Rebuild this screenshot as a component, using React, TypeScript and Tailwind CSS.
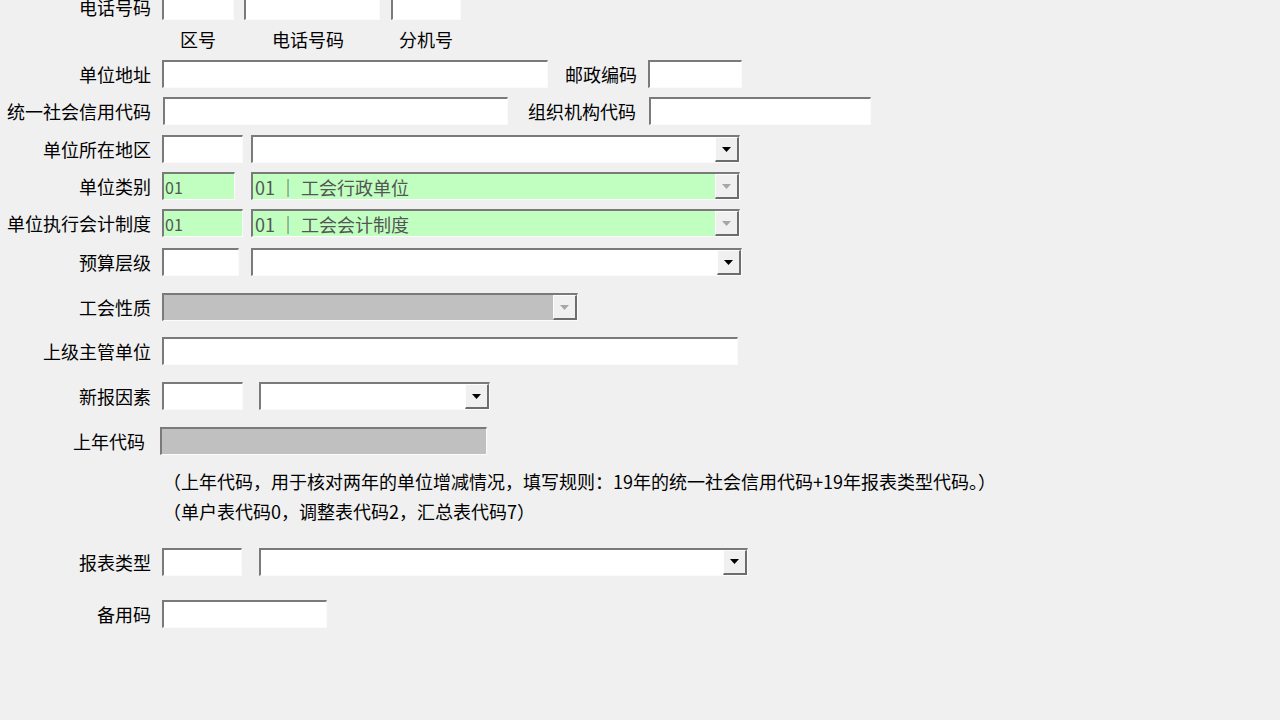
import React from "react";

// classic sunken field edge
const sunken =
  "border-t-2 border-l-2 border-b border-r border-t-[#7a7a7a] border-l-[#7a7a7a] border-b-[#fbfbfb] border-r-[#fbfbfb]";

function Field({ className, text }: { className: string; text?: string }) {
  return (
    <div className={`h-[28px] ${sunken} ${className} flex items-center pl-[1px] text-[#555] text-[16px] overflow-hidden whitespace-nowrap`}>
      {text}
    </div>
  );
}

function Arrow({ disabled }: { disabled?: boolean }) {
  return (
    <div className="w-[24px] h-full bg-[#f0f0f0] border-t border-l border-b-2 border-r-2 border-t-[#fdfdfd] border-l-[#fdfdfd] border-b-[#6d6d6d] border-r-[#6d6d6d] flex items-center justify-center">
      <svg width="9" height="5" viewBox="0 0 9 5">
        <path d="M0 0H9L4.5 5Z" fill={disabled ? "#a6a6a6" : "#000"} />
      </svg>
    </div>
  );
}

function Combo({ className, text, disabled }: { className: string; text?: string; disabled?: boolean }) {
  return (
    <div className={`h-[28px] ${sunken} ${className} flex items-stretch`}>
      <div className="flex-1 flex items-center pl-[2px] text-[#555] whitespace-nowrap overflow-hidden">{text}</div>
      <Arrow disabled={disabled} />
    </div>
  );
}

function Label({ children, className = "" }: { children: React.ReactNode; className?: string }) {
  return <div className={`w-[151px] shrink-0 text-right whitespace-nowrap ${className}`}>{children}</div>;
}

export default function App() {
  return (
    <div className="w-[1280px] h-[720px] overflow-hidden bg-[#f0f0f0] text-black text-[18px] leading-none font-['Noto_Sans_CJK_SC','Noto_Sans',sans-serif]">
      <div className="-mt-[8px] flex flex-col">
        {/* 电话号码 */}
        <div className="h-[28px] flex items-center">
          <Label className="pt-[2px]">电话号码</Label>
          <Field className="ml-[11px] w-[72px] bg-white" />
          <Field className="ml-[10px] w-[136px] bg-white" />
          <Field className="ml-[11px] w-[70px] bg-white" />
        </div>
        <div className="mt-[8px] h-[22px] flex items-center text-[18px]">
          <div className="ml-[162px] w-[72px] text-center">区号</div>
          <div className="ml-[10px] w-[136px] text-center pr-[8px]">电话号码</div>
          <div className="ml-[11px] w-[70px] text-center">分机号</div>
        </div>

        <div className="mt-[10px] h-[28px] flex items-center">
          <Label>单位地址</Label>
          <Field className="ml-[11px] w-[386px] bg-white" />
          <div className="ml-[17px] w-[72px] text-right">邮政编码</div>
          <Field className="ml-[11px] w-[94px] bg-white" />
        </div>

        <div className="mt-[9px] h-[28px] flex items-center">
          <Label>统一社会信用代码</Label>
          <Field className="ml-[12px] w-[345px] bg-white" />
          <div className="ml-[20px] w-[108px] text-right">组织机构代码</div>
          <Field className="ml-[13px] w-[222px] bg-white" />
        </div>

        <div className="mt-[10px] h-[28px] flex items-center">
          <Label>单位所在地区</Label>
          <Field className="ml-[11px] w-[81px] bg-white" />
          <Combo className="ml-[8px] w-[489px] bg-white" />
        </div>

        <div className="mt-[9px] h-[28px] flex items-center">
          <Label>单位类别</Label>
          <Field className="ml-[11px] w-[73px] bg-[#c0ffc0]" text="01" />
          <Combo className="ml-[16px] w-[489px] bg-[#c0ffc0]" text="01 ｜ 工会行政单位" disabled />
        </div>

        <div className="mt-[9px] h-[28px] flex items-center">
          <Label>单位执行会计制度</Label>
          <Field className="ml-[11px] w-[81px] bg-[#c0ffc0]" text="01" />
          <Combo className="ml-[8px] w-[489px] bg-[#c0ffc0]" text="01 ｜ 工会会计制度" disabled />
        </div>

        <div className="mt-[11px] h-[28px] flex items-center">
          <Label>预算层级</Label>
          <Field className="ml-[11px] w-[77px] bg-white" />
          <Combo className="ml-[12px] w-[491px] bg-white" />
        </div>

        <div className="mt-[17px] h-[28px] flex items-center">
          <Label>工会性质</Label>
          <Combo className="ml-[11px] w-[416px] bg-[#c0c0c0]" disabled />
        </div>

        <div className="mt-[16px] h-[28px] flex items-center">
          <Label>上级主管单位</Label>
          <Field className="ml-[11px] w-[576px] bg-white" />
        </div>

        <div className="mt-[17px] h-[28px] flex items-center">
          <Label>新报因素</Label>
          <Field className="ml-[11px] w-[81px] bg-white" />
          <Combo className="ml-[16px] w-[231px] bg-white" />
        </div>

        <div className="mt-[17px] h-[28px] flex items-center">
          <Label className="pr-[6px]">上年代码</Label>
          <Field className="ml-[9px] w-[327px] bg-[#c0c0c0]" />
        </div>

        <div className="mt-[11px] pl-[163px] text-[18px]">
          <div className="h-[30px] flex items-center">
            （上年代码，用于核对两年的单位增减情况，填写规则：19年的统一社会信用代码+19年报表类型代码。）
          </div>
          <div className="h-[30px] flex items-center">（单户表代码0，调整表代码2，汇总表代码7）</div>
        </div>

        <div className="mt-[21px] h-[29px] flex items-center">
          <Label>报表类型</Label>
          <Field className="ml-[11px] w-[80px] bg-white" />
          <Combo className="ml-[17px] w-[489px] bg-white" />
        </div>

        <div className="mt-[23px] h-[29px] flex items-center">
          <Label>备用码</Label>
          <Field className="ml-[11px] w-[165px] bg-white" />
        </div>
      </div>
    </div>
  );
}
